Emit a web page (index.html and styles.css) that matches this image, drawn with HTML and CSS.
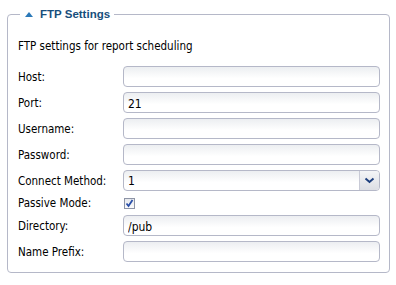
FILE: index.html
```html
<!DOCTYPE html>
<html lang="en">
<head>
    <meta charset="UTF-8">
    <title>FTP Settings</title>
    <link rel="stylesheet" href="styles.css">
</head>
<body>
    <fieldset class="panel">
        <legend class="panel-title"><span class="toggle"></span>FTP Settings</legend>
        <p class="intro">FTP settings for report scheduling</p>
        <div class="form-grid">
            <label class="field-label">Host:</label>
            <input class="field" type="text" value="">

            <label class="field-label">Port:</label>
            <input class="field" type="text" value="21">

            <label class="field-label">Username:</label>
            <input class="field" type="text" value="">

            <label class="field-label">Password:</label>
            <input class="field" type="password" value="">

            <label class="field-label">Connect Method:</label>
            <div class="combo">
                <span class="combo-value">1</span>
                <span class="combo-btn">
                    <svg width="11" height="7" viewBox="0 0 11 7"><path d="M1.5 1.5 L5.5 5 L9.5 1.5" fill="none" stroke="#1d3f7e" stroke-width="2"/></svg>
                </span>
            </div>

            <label class="field-label check-row">Passive Mode:</label>
            <div class="check-row"><span class="checkbox">
                <svg width="9" height="9" viewBox="0 0 9 9"><path d="M1.5 4.5 L3.5 7 L7.5 1" fill="none" stroke="#2a4fa8" stroke-width="1.8"/></svg>
            </span></div>

            <label class="field-label">Directory:</label>
            <input class="field" type="text" value="/pub">

            <label class="field-label">Name Prefix:</label>
            <input class="field" type="text" value="">
        </div>
    </fieldset>
</body>
</html>
```

FILE: styles.css
```css
* {
    margin: 0;
    padding: 0;
    box-sizing: border-box;
}

body {
    font-family: "DejaVu Sans", Verdana, sans-serif;
    font-stretch: condensed;
    font-size: 11.5px;
    color: #000;
    background: #fff;
    padding: 8px 7px 0 7px;
}

.panel {
    width: 383px;
    height: 265px;
    border: 1px solid #b5b8c8;
    border-radius: 4px;
    padding: 0 9px 0 10px;
}

.panel-title {
    color: #174e7c;
    font-family: "Liberation Sans", Arial, sans-serif;
    font-stretch: normal;
    font-weight: bold;
    font-size: 11.5px;
    margin-left: 2px;
    padding: 0 4px 0 5px;
    display: flex;
    align-items: center;
}

.toggle {
    width: 0;
    height: 0;
    border-left: 4px solid transparent;
    border-right: 4px solid transparent;
    border-bottom: 5px solid #2b79b8;
    margin-right: 7px;
}

.intro {
    margin-top: 19px;
    margin-bottom: 13px;
}

.form-grid {
    display: grid;
    grid-template-columns: 105px 257px;
    row-gap: 5px;
    align-items: center;
}

.field {
    height: 21px;
    width: 100%;
    border: 1px solid #b5b8c8;
    border-radius: 4px;
    background: linear-gradient(#eceef1, #fff 60%);
    font-family: "DejaVu Sans", Verdana, sans-serif;
    font-stretch: condensed;
    font-size: 12px;
    padding: 2px 4px 0 4px;
    outline: none;
}

.combo {
    height: 21px;
    display: flex;
    border: 1px solid #b5b8c8;
    border-radius: 4px;
    background: linear-gradient(#eceef1, #fff 60%);
    overflow: hidden;
}

.combo-value {
    flex: 1;
    font-size: 12px;
    padding: 3px 4px 0 4px;
}

.combo-btn {
    width: 20px;
    border-left: 1px solid #c8cad6;
    background: linear-gradient(#f4f5f7, #dcdee4);
    display: flex;
    align-items: center;
    justify-content: center;
}

.check-row {
    height: 14px;
    display: flex;
    align-items: center;
}

.checkbox {
    width: 11px;
    height: 11px;
    margin-left: 1px;
    border: 1px solid #8d94a6;
    background: linear-gradient(#e6e8ec, #fbfbfc);
    display: flex;
    align-items: center;
    justify-content: center;
}
```
